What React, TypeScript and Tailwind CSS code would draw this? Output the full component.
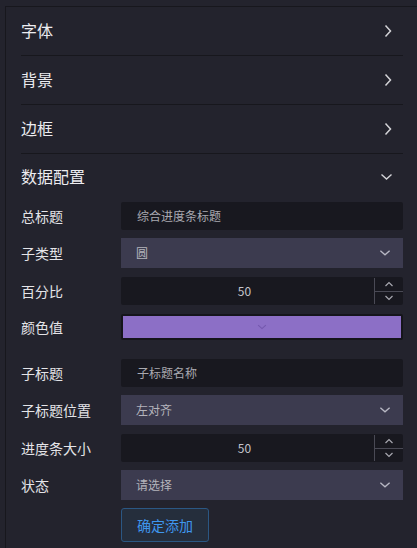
import React from "react";

const FONT = "font-['Noto_Sans_CJK_SC','Noto_Sans',sans-serif]";

const ChevronRight = () => (
  <svg width="10" height="14" viewBox="0 0 10 14" fill="none" className="mr-[10px]">
    <path d="M2.5 1.5 L7.5 7 L2.5 12.5" stroke="#d4d4d8" strokeWidth="1.5" />
  </svg>
);

const ChevronDown = ({ color = "#d4d4d8", w = 13 }: { color?: string; w?: number }) => (
  <svg width={w} height="8" viewBox="0 0 13 8" fill="none">
    <path d="M1.5 1.5 L6.5 6 L11.5 1.5" stroke={color} strokeWidth="1.4" />
  </svg>
);

const SectionHeader = ({ title, open }: { title: string; open?: boolean }) => (
  <div
    className={`flex items-center justify-between ${
      open ? "h-[48px] pb-[4px]" : "h-[49px] pb-[3px] border-b border-[#17171d]"
    }`}
  >
    <span className="text-[16px] text-[#ececf0]">{title}</span>
    {open ? (
      <span className="mr-[10px] mt-[2px]">
        <ChevronDown />
      </span>
    ) : (
      <span className="mt-[2px]">
        <ChevronRight />
      </span>
    )}
  </div>
);

const Row = ({
  label,
  children,
  className = "",
}: {
  label: string;
  children: React.ReactNode;
  className?: string;
}) => (
  <div className={`flex items-center ${className}`}>
    <div className="w-[100px] shrink-0 text-[14px] text-[#e4e4e8]">{label}</div>
    <div className="flex-1">{children}</div>
  </div>
);

const TextInput = ({ value }: { value: string }) => (
  <div className="h-[28px] rounded-[2px] bg-[#18181f] pl-[16px] flex items-center text-[12px] text-[#a9a9b0]">
    {value}
  </div>
);

const Select = ({ value }: { value: string }) => (
  <div className="h-[30px] bg-[#3c3b4f] pl-[15px] pr-[12px] flex items-center justify-between text-[12px] text-[#b4b4bc]">
    <span>{value}</span>
    <ChevronDown color="#b8b8c4" w={12} />
  </div>
);

const NumberInput = ({ value }: { value: number }) => (
  <div className="h-[28px] rounded-[2px] bg-[#18181f] flex">
    <div className="flex-1 flex items-center justify-center text-[12px] text-[#c4c4cc] pr-[6px]">
      {value}
    </div>
    <div className="w-[29px] my-[1px] border-l border-[#4a4a55] flex flex-col">
      <div className="flex-1 border-b border-[#4a4a55] flex items-center justify-center">
        <svg width="10" height="6" viewBox="0 0 10 6" fill="none">
          <path d="M1.5 5 L5 1.5 L8.5 5" stroke="#a8a8b0" strokeWidth="1.2" />
        </svg>
      </div>
      <div className="flex-1 flex items-center justify-center">
        <svg width="10" height="6" viewBox="0 0 10 6" fill="none">
          <path d="M1.5 1 L5 4.5 L8.5 1" stroke="#a8a8b0" strokeWidth="1.2" />
        </svg>
      </div>
    </div>
  </div>
);

export default function App() {
  return (
    <div className={`w-[417px] h-[548px] overflow-hidden bg-[#23232d] ${FONT}`}>
      <div className="ml-[5px] mt-[6px] h-full border-l border-t border-[#17171d] pl-[15px] pr-[14px]">
        <SectionHeader title="字体" />
        <SectionHeader title="背景" />
        <SectionHeader title="边框" />
        <SectionHeader title="数据配置" open />

        <Row label="总标题">
          <TextInput value="综合进度条标题" />
        </Row>
        <Row label="子类型" className="mt-[8px]">
          <Select value="圆" />
        </Row>
        <Row label="百分比" className="mt-[9px]">
          <NumberInput value={50} />
        </Row>
        <Row label="颜色值" className="mt-[9px]">
          <div className="h-[26px] rounded-[2px] border-[2px] border-[#15151b] bg-[#8c6fc6] flex items-center justify-center">
            <ChevronDown color="#7457ad" w={10} />
          </div>
        </Row>
        <Row label="子标题" className="mt-[19px]">
          <TextInput value="子标题名称" />
        </Row>
        <Row label="子标题位置" className="mt-[8px]">
          <Select value="左对齐" />
        </Row>
        <Row label="进度条大小" className="mt-[9px]">
          <NumberInput value={50} />
        </Row>
        <Row label="状态" className="mt-[8px]">
          <Select value="请选择" />
        </Row>
        <div className="mt-[8px] pl-[100px]">
          <button className="h-[34px] px-[15px] rounded-[3px] border border-[#2b5783] bg-[#252e3c] text-[14px] text-[#3f96ee]">
            确定添加
          </button>
        </div>
      </div>
    </div>
  );
}
